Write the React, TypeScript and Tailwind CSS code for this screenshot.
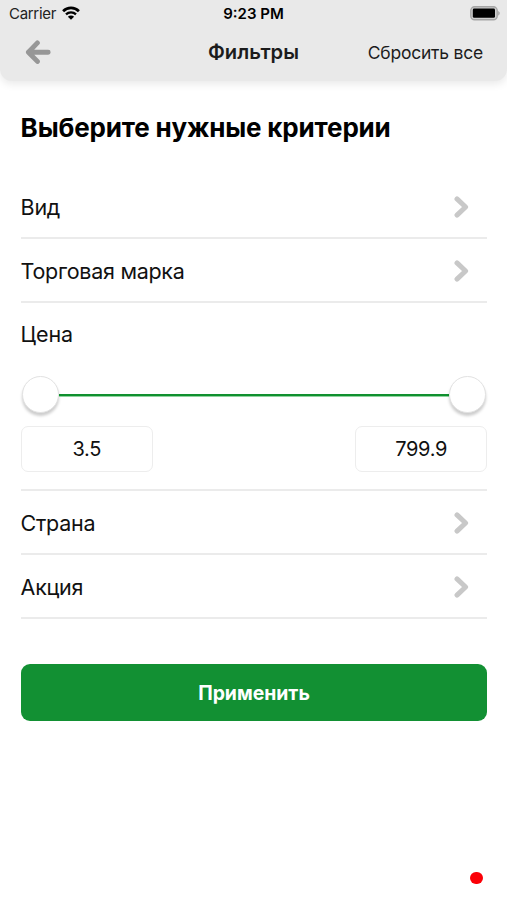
import { useState } from 'react';

const DIVIDER = 'border-b-2 border-[#ebebeb]';

function StatusBar() {
  return (
    <div className="relative flex h-[27px] items-center justify-between pl-[9px] pr-[7px] text-black">
      <div className="flex items-center gap-[6px]">
        <span className="text-[15px] leading-none tracking-[-0.3px] text-[#222]">Carrier</span>
        <svg width="18" height="14" viewBox="0 0 18 14" fill="none" className="-mt-px" aria-hidden="true">
          <path d="M1.1 5.2a11.2 11.2 0 0 1 15.8 0" stroke="#000" strokeWidth="2.7" />
          <path d="M4 8.3a7.2 7.2 0 0 1 10 0" stroke="#000" strokeWidth="2.3" />
          <path d="M9 13.7 5.9 10.7a4.4 4.4 0 0 1 6.2 0z" fill="#000" />
        </svg>
      </div>
      <span className="absolute inset-x-0 text-center text-[15px] font-semibold leading-none">9:23 PM</span>
      <svg width="30" height="15" viewBox="0 0 30 15" aria-hidden="true">
        <rect x="0.8" y="0.8" width="26.4" height="13" rx="3.8" fill="#cfcfcf" stroke="#a5a5a5" strokeWidth="1.4" />
        <rect x="2.8" y="2.6" width="22.2" height="9.2" rx="1.4" fill="#000" />
        <path d="M28.2 5c2 .8 2 3.8 0 4.6z" fill="#a5a5a5" />
      </svg>
    </div>
  );
}

function Header({ onReset }: { onReset: () => void }) {
  return (
    <header className="h-[81px] rounded-b-[12px] bg-[#e9e9e9] shadow-[0_3px_9px_rgba(0,0,0,0.09)]">
      <StatusBar />
      <div className="relative flex h-[50px] items-center justify-between pl-[25px] pr-[24px] text-[#1c1c1c]">
        <button type="button" aria-label="Назад">
          <svg width="26" height="26" viewBox="0 0 26 26" fill="none" aria-hidden="true">
            <path
              d="M12.4 3.9 3.4 13.2l9 9.2M3.4 13.2h19.8"
              stroke="#979797"
              strokeWidth="4.9"
              strokeLinecap="round"
              strokeLinejoin="round"
            />
          </svg>
        </button>
        <h1 className="pointer-events-none absolute inset-x-0 top-[10px] text-center text-[20.2px] leading-[30px] font-semibold">
          Фильтры
        </h1>
        <button type="button" onClick={onReset} className="pt-[2px] text-[17.5px] tracking-[-0.22px]">
          Сбросить все
        </button>
      </div>
    </header>
  );
}

function FilterRow({ label }: { label: string }) {
  return (
    <button
      type="button"
      className={`flex h-16 w-full items-center justify-between pr-[18.5px] pt-px text-left ${DIVIDER}`}
    >
      <span className="pt-px text-[21.5px] tracking-[-0.28px]">{label}</span>
      <svg width="16" height="24" viewBox="0 0 16 24" fill="none" aria-hidden="true">
        <path
          d="M4 3.9 12.6 12 4 20.1"
          stroke="#c8c8c8"
          strokeWidth="5"
          strokeLinecap="round"
          strokeLinejoin="round"
        />
      </svg>
    </button>
  );
}

function Thumb() {
  return (
    <span className="size-[37px] rounded-full border border-[#e2e2e2] bg-white shadow-[0_3px_3px_rgba(0,0,0,0.2)]" />
  );
}

function PriceInput({ value, onChange }: { value: string; onChange: (value: string) => void }) {
  return (
    <input
      value={value}
      onChange={(e) => onChange(e.target.value)}
      className="h-[46px] w-[132.5px] rounded-[7px] border-[1.5px] border-[#ededed] text-center text-[20px] tracking-[-0.3px] outline-none"
    />
  );
}

export default function App() {
  const [min, setMin] = useState('3.5');
  const [max, setMax] = useState('799.9');

  function reset() {
    setMin('3.5');
    setMax('799.9');
  }

  return (
    <div className="relative h-[900px] w-full overflow-hidden bg-white font-['Inter',sans-serif] text-[#111]">
      <Header onReset={reset} />
      <main className="pl-[20.6px] pr-[19.6px]">
        <h2 className="flex h-[94px] items-center pb-[2px] text-[26px] font-bold tracking-[-0.17px] text-black">
          Выберите нужные критерии
        </h2>
        <FilterRow label="Вид" />
        <FilterRow label="Торговая марка" />

        <section className={`h-[188px] ${DIVIDER}`}>
          <h3 className="flex h-[63px] items-center text-[21.5px] tracking-[-0.1px]">Цена</h3>
          <div className="flex h-[60px] items-start px-[1.5px] pt-[10px]">
            <Thumb />
            <span className="mt-[18px] h-[3px] flex-1 border-b border-[#8fd49f] bg-[#10902f]" />
            <Thumb />
          </div>
          <div className="flex justify-between">
            <PriceInput value={min} onChange={setMin} />
            <PriceInput value={max} onChange={setMax} />
          </div>
        </section>

        <FilterRow label="Страна" />
        <FilterRow label="Акция" />

        <button
          type="button"
          className="mt-[45px] h-[57px] w-full rounded-[9px] bg-[#129033] pt-[2px] text-[19.4px] font-bold text-white"
        >
          Применить
        </button>
      </main>
      <span className="absolute bottom-4 right-6 h-[12px] w-[13px] rounded-full bg-[#fb0007]" />
    </div>
  );
}
